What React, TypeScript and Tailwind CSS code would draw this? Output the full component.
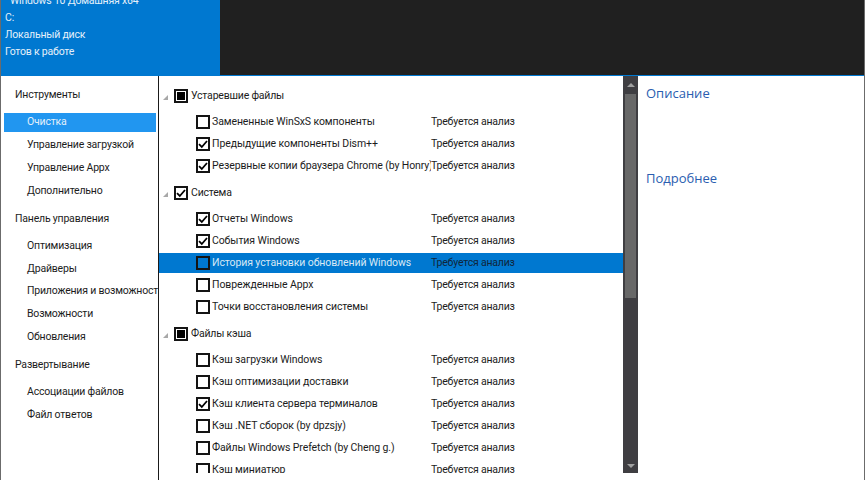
import React from "react";

type Check = "none" | "checked" | "mixed";

interface Item {
  name: string;
  check: Check;
  selected?: boolean;
}

interface Group {
  title: string;
  check: Check;
  items: Item[];
}

const groups: Group[] = [
  {
    title: "Устаревшие файлы",
    check: "mixed",
    items: [
      { name: "Замененные WinSxS компоненты", check: "none" },
      { name: "Предыдущие компоненты Dism++", check: "checked" },
      { name: "Резервные копии браузера Chrome (by Honry)", check: "checked" },
    ],
  },
  {
    title: "Система",
    check: "checked",
    items: [
      { name: "Отчеты Windows", check: "checked" },
      { name: "События Windows", check: "checked" },
      { name: "История установки обновлений Windows", check: "none", selected: true },
      { name: "Поврежденные Appx", check: "none" },
      { name: "Точки восстановления системы", check: "none" },
    ],
  },
  {
    title: "Файлы кэша",
    check: "mixed",
    items: [
      { name: "Кэш загрузки Windows", check: "none" },
      { name: "Кэш оптимизации доставки", check: "none" },
      { name: "Кэш клиента сервера терминалов", check: "checked" },
      { name: "Кэш .NET сборок (by dpzsjy)", check: "none" },
      { name: "Файлы Windows Prefetch (by Cheng g.)", check: "none" },
      { name: "Кэш миниатюр", check: "none" },
    ],
  },
];

const nav = [
  { title: "Инструменты", items: ["Очистка", "Управление загрузкой", "Управление Appx", "Дополнительно"] },
  { title: "Панель управления", items: ["Оптимизация", "Драйверы", "Приложения и возможности", "Возможности", "Обновления"] },
  { title: "Развертывание", items: ["Ассоциации файлов", "Файл ответов"] },
];

function CheckBox({ state, selected }: { state: Check; selected?: boolean }) {
  return (
    <span
      className={`flex h-[14px] w-[14px] shrink-0 items-center justify-center border-2 border-[#141414] ${
        selected ? "bg-transparent" : "bg-white"
      }`}
    >
      {state === "mixed" && <span className="h-[8px] w-[8px] bg-black" />}
      {state === "checked" && (
        <svg viewBox="0 0 10 10" className="h-[10px] w-[10px]">
          <path d="M1 5.2 L3.8 8 L9 2" fill="none" stroke="#000" strokeWidth="1.8" />
        </svg>
      )}
    </span>
  );
}

export default function App() {
  return (
    <div className="flex h-[480px] w-[865px] flex-col overflow-hidden border-x border-[#6b6b6b] bg-white font-['Roboto',sans-serif] text-[10.5px] tracking-[-0.2px] text-[#1c1c1c]">
      {/* Header */}
      <div className="flex h-[76px] shrink-0 border-b border-[#0078d0] bg-[#202020]">
        <div className="flex w-[219px] flex-col justify-end overflow-hidden bg-[#0078d0] pb-[15px] pl-[4px] text-[#e4f0fa]">
          <div className="h-[17px] whitespace-nowrap pl-[5px] leading-[17px]">Windows 10 Домашняя x64</div>
          <div className="h-[17px] leading-[17px]">C:</div>
          <div className="h-[17px] leading-[17px]">Локальный диск</div>
          <div className="h-[17px] leading-[17px]">Готов к работе</div>
        </div>
      </div>

      <div className="flex min-h-0 flex-1">
        {/* Sidebar */}
        <div className="w-[158px] shrink-0 overflow-hidden border-r border-[#1a1a1a] pt-[7.5px]">
          {nav.map((section) => (
            <div key={section.title} className="mb-[5.25px]">
              <div className="flex h-[23px] items-center whitespace-nowrap pl-[14px]">{section.title}</div>
              <div className="mt-[4.25px]">
                {section.items.map((item) => (
                  <div key={item} className="flex h-[22.75px] items-center">
                    <div
                      className={`w-full overflow-hidden whitespace-nowrap ${
                        item === "Очистка"
                          ? "ml-[3px] mr-[2px] flex h-[19px] items-center bg-[#2196f0] pl-[23px] text-[#e4f0fa]"
                          : "pl-[26px]"
                      }`}
                    >
                      {item}
                    </div>
                  </div>
                ))}
              </div>
            </div>
          ))}
        </div>

        {/* Cleanup list */}
        <div className="h-[397px] w-[464px] shrink-0 overflow-hidden pt-[9px]">
          {groups.map((group) => (
            <div key={group.title} className="mb-[5px]">
              <div className="flex h-[22px] items-center">
                <span className="ml-[4px] mt-[3px] h-0 w-0 border-b-[5px] border-l-[5px] border-b-[#a8a8a8] border-l-transparent" />
                <span className="ml-[6px]">
                  <CheckBox state={group.check} />
                </span>
                <span className="ml-[3px]">{group.title}</span>
              </div>
              <div className="mt-[4px]">
                {group.items.map((item) => (
                  <div
                    key={item.name}
                    className={`flex h-[22px] items-center ${
                      item.selected ? "bg-[#0078d0] bg-clip-content py-px text-[#d8e8f5]" : ""
                    }`}
                  >
                    <span className="ml-[37px]">
                      <CheckBox state={item.check} selected={item.selected} />
                    </span>
                    <span className="ml-[2px] w-[219px] shrink-0 overflow-hidden whitespace-nowrap tracking-[-0.1px]">
                      {item.name}
                    </span>
                    <span className={item.selected ? "text-[#10263a]" : ""}>Требуется анализ</span>
                  </div>
                ))}
              </div>
            </div>
          ))}
        </div>

        {/* Scrollbar */}
        <div className="flex h-[397px] w-[15px] shrink-0 flex-col items-center bg-[#3f3e42]">
          <div className="flex h-[18px] shrink-0 items-center justify-center">
            <span className="h-0 w-0 border-x-[4px] border-b-[4px] border-x-transparent border-b-[#a0a0a0]" />
          </div>
          <div className="h-[204px] w-[11px] bg-[#686868]" />
          <div className="flex-1" />
          <div className="flex h-[14px] shrink-0 items-center justify-center">
            <span className="h-0 w-0 border-x-[4px] border-t-[4px] border-x-transparent border-t-[#a0a0a0]" />
          </div>
        </div>

        {/* Description */}
        <div className="flex-1 pl-[8px] pt-[7px] font-['Open_Sans',sans-serif] text-[13px] tracking-normal text-[#2a5db0]">
          <div className="h-[20px] leading-[20px]">Описание</div>
          <div className="mt-[65px] h-[20px] leading-[20px]">Подробнее</div>
        </div>
      </div>
    </div>
  );
}
